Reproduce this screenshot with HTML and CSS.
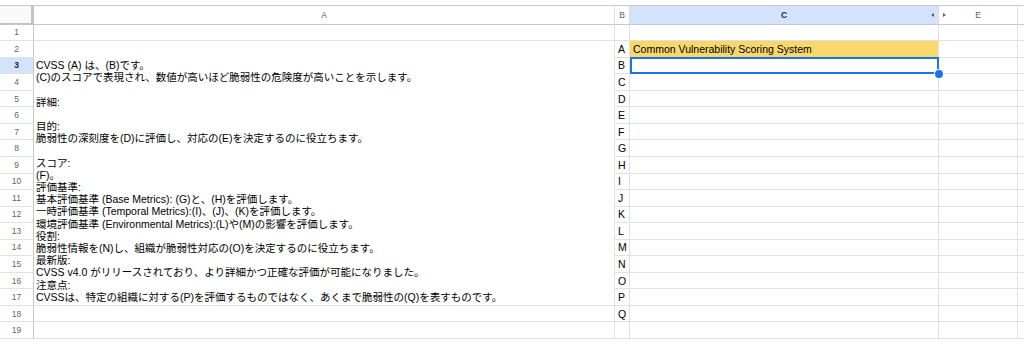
FILE: index.html
```html
<!DOCTYPE html>
<html lang="ja">
<head>
<meta charset="utf-8">
<title>CVSS</title>
<link rel="stylesheet" href="styles.css">
</head>
<body>
<div class="sheet">
  <div class="hdr corner"></div>
  <div class="hdr">A</div>
  <div class="hdr">B</div>
  <div class="hdr hdr-sel">C<span class="arr-l"></span></div>
  <div class="hdr"><span class="arr-r"></span>E</div>
  <div class="hdr"></div>

  <div class="rh">1</div><div class="c"></div><div class="c"></div><div class="c"></div><div class="c"></div><div class="c"></div>

  <div class="rh">2</div>
  <div class="c merged">
    <div class="ln">CVSS (A) は、(B)です。</div>
    <div class="ln">(C)のスコアで表現され、数値が高いほど脆弱性の危険度が高いことを示します。</div>
    <div class="ln">&nbsp;</div>
    <div class="ln">詳細:</div>
    <div class="ln">&nbsp;</div>
    <div class="ln">目的:</div>
    <div class="ln">脆弱性の深刻度を(D)に評価し、対応の(E)を決定するのに役立ちます。</div>
    <div class="ln">&nbsp;</div>
    <div class="ln">スコア:</div>
    <div class="ln">(F)。</div>
    <div class="ln">評価基準:</div>
    <div class="ln">基本評価基準 (Base Metrics): (G)と、(H)を評価します。</div>
    <div class="ln">一時評価基準 (Temporal Metrics):(I)、(J)、(K)を評価します。</div>
    <div class="ln">環境評価基準 (Environmental Metrics):(L)や(M)の影響を評価します。</div>
    <div class="ln">役割:</div>
    <div class="ln">脆弱性情報を(N)し、組織が脆弱性対応の(O)を決定するのに役立ちます。</div>
    <div class="ln">最新版:</div>
    <div class="ln">CVSS v4.0 がリリースされており、より詳細かつ正確な評価が可能になりました。</div>
    <div class="ln">注意点:</div>
    <div class="ln">CVSSは、特定の組織に対する(P)を評価するものではなく、あくまで脆弱性の(Q)を表すものです。</div>
  </div>
  <div class="c lab">A</div><div class="c title">Common Vulnerability Scoring System</div><div class="c"></div><div class="c"></div>

  <div class="rh rh-sel">3</div><div class="c lab">B</div><div class="c sel"></div><div class="c"></div><div class="c"></div>
  <div class="rh">4</div><div class="c lab">C</div><div class="c"></div><div class="c"></div><div class="c"></div>
  <div class="rh">5</div><div class="c lab">D</div><div class="c"></div><div class="c"></div><div class="c"></div>
  <div class="rh">6</div><div class="c lab">E</div><div class="c"></div><div class="c"></div><div class="c"></div>
  <div class="rh">7</div><div class="c lab">F</div><div class="c"></div><div class="c"></div><div class="c"></div>
  <div class="rh">8</div><div class="c lab">G</div><div class="c"></div><div class="c"></div><div class="c"></div>
  <div class="rh">9</div><div class="c lab">H</div><div class="c"></div><div class="c"></div><div class="c"></div>
  <div class="rh">10</div><div class="c lab">I</div><div class="c"></div><div class="c"></div><div class="c"></div>
  <div class="rh">11</div><div class="c lab">J</div><div class="c"></div><div class="c"></div><div class="c"></div>
  <div class="rh">12</div><div class="c lab">K</div><div class="c"></div><div class="c"></div><div class="c"></div>
  <div class="rh">13</div><div class="c lab">L</div><div class="c"></div><div class="c"></div><div class="c"></div>
  <div class="rh">14</div><div class="c lab">M</div><div class="c"></div><div class="c"></div><div class="c"></div>
  <div class="rh">15</div><div class="c lab">N</div><div class="c"></div><div class="c"></div><div class="c"></div>
  <div class="rh">16</div><div class="c lab">O</div><div class="c"></div><div class="c"></div><div class="c"></div>
  <div class="rh">17</div><div class="c lab">P</div><div class="c"></div><div class="c"></div><div class="c"></div>
  <div class="rh">18</div><div class="c"></div><div class="c lab">Q</div><div class="c"></div><div class="c"></div><div class="c"></div>
  <div class="rh">19</div><div class="c"></div><div class="c"></div><div class="c"></div><div class="c"></div><div class="c"></div>
</div>
</body>
</html>
```
FILE: styles.css
```css
html, body {
  margin: 0;
  padding: 0;
  background: #ffffff;
}

body {
  font-family: "Liberation Sans", "Noto Sans CJK JP", sans-serif;
  color: #000000;
  overflow: hidden;
}

.sheet {
  display: grid;
  grid-template-columns: 34px 581px 15px 309px 79px 1fr;
  grid-template-rows: 18.6px repeat(19, 16.55px);
  margin-top: 5px;
  border-top: 1px solid #c7c7c7;
}

.hdr {
  position: relative;
  display: flex;
  align-items: center;
  justify-content: center;
  font-size: 8.5px;
  color: #5f6368;
  background: #ffffff;
  border-right: 1px solid #dadce0;
  border-bottom: 1px solid #c7c7c7;
  box-sizing: border-box;
}

.corner {
  background: #f8f9fa;
  border-right: 3px solid #c4c4c4;
  border-bottom: 2px solid #c4c4c4;
}

.hdr-sel {
  background: #d3e3fd;
  color: #1f1f1f;
  font-weight: bold;
}

.arr-l {
  position: absolute;
  right: 4px;
  top: 7px;
  width: 0;
  height: 0;
  border-top: 2.5px solid transparent;
  border-bottom: 2.5px solid transparent;
  border-right: 3px solid #5f6368;
}

.arr-r {
  position: absolute;
  left: 4px;
  top: 7px;
  width: 0;
  height: 0;
  border-top: 2.5px solid transparent;
  border-bottom: 2.5px solid transparent;
  border-left: 3px solid #5f6368;
}

.rh {
  display: flex;
  align-items: center;
  justify-content: center;
  font-size: 8.5px;
  color: #5f6368;
  background: #ffffff;
  border-right: 1px solid #c7c7c7;
  border-bottom: 1px solid #e1e1e1;
  box-sizing: border-box;
}

.rh-sel {
  background: #d3e3fd;
  color: #1f1f1f;
  font-weight: bold;
}

.c {
  border-right: 1px solid #e1e1e1;
  border-bottom: 1px solid #e1e1e1;
  box-sizing: border-box;
  font-size: 10.5px;
  display: flex;
  align-items: center;
  padding: 0 3px;
  white-space: nowrap;
  min-width: 0;
}

.merged {
  grid-row: span 16;
  flex-direction: column;
  align-items: stretch;
  justify-content: flex-end;
  padding: 0 2px 2px 2px;
  overflow: visible;
}

.ln {
  line-height: 12.2px;
  height: 12.2px;
}

.lab {
  padding-left: 3px;
}

.title {
  background: #f8d76c;
}

.sel {
  position: relative;
}

.sel::before {
  content: "";
  position: absolute;
  left: 0;
  top: -1px;
  right: -1px;
  bottom: -1px;
  border: 2px solid #1a73e8;
}

.sel::after {
  content: "";
  position: absolute;
  right: -5px;
  bottom: -5px;
  width: 8px;
  height: 8px;
  border-radius: 50%;
  background: #1a73e8;
  box-shadow: 0 0 0 1px #ffffff;
}
```
